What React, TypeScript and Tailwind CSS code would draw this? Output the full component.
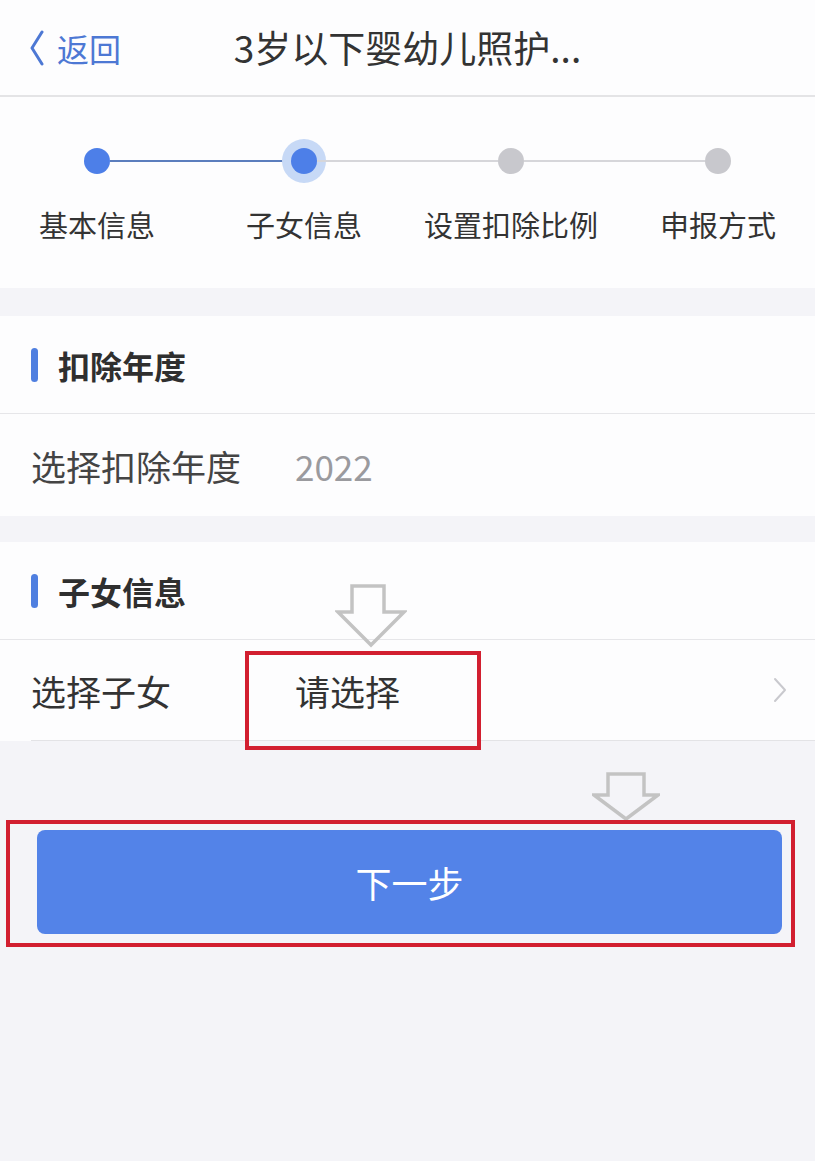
import React from "react";

const steps = [
  { label: "基本信息", state: "done" },
  { label: "子女信息", state: "active" },
  { label: "设置扣除比例", state: "todo" },
  { label: "申报方式", state: "todo" },
];

// gray outline arrow used as annotation in the screenshot
const DownArrow: React.FC<{ w: number; h: number; points: string }> = ({ w, h, points }) => (
  <svg width={w} height={h} viewBox={`0 0 ${w} ${h}`}>
    <polygon points={points} fill="none" stroke="#c3c3c3" strokeWidth={3.5} strokeLinejoin="miter" />
  </svg>
);

const SectionTitle: React.FC<{ title: string }> = ({ title }) => (
  <div className="flex items-center h-[98px] pl-[31px] border-b border-[#e6e6e9]">
    <span className="w-[7px] h-[34px] rounded-full bg-[#4f7fe0]" />
    <span className="ml-[20px] text-[32px] font-semibold text-[#2f2f2f] leading-none">{title}</span>
  </div>
);

export default function App() {
  return (
    <div
      className="w-[815px] h-[1161px] bg-[#f4f4f8] overflow-hidden"
      style={{ fontFamily: '"Noto Sans CJK SC", "Noto Sans", sans-serif' }}
    >
      {/* Header */}
      <div className="grid grid-cols-[1fr_auto_1fr] items-center h-[97px] bg-[#fdfdfe] border-b-2 border-[#e4e4e6]">
        <div className="flex items-center pl-[30px] text-[#4d78d4]">
          <svg width="14" height="36" viewBox="0 0 14 36">
            <polyline points="12,2 2,18 12,34" fill="none" stroke="#4d78d4" strokeWidth="3" strokeLinecap="round" strokeLinejoin="round" />
          </svg>
          <span className="ml-[13px] text-[32px] leading-none">返回</span>
        </div>
        <div className="text-[37px] text-[#333] leading-none">3岁以下婴幼儿照护...</div>
        <div />
      </div>

      {/* Stepper */}
      <div className="bg-[#fdfdfe] h-[191px] overflow-hidden flex justify-center pt-[48px]">
        {steps.map((s, i) => (
          <div key={s.label} className="w-[207px] shrink-0 flex flex-col items-center">
            <div className="w-full flex items-center h-[32px]">
              <div
                className={`flex-1 h-[2px] ${i === 0 ? "bg-transparent" : i === 1 ? "bg-[#5b7dbd]" : "bg-[#d6d6da]"}`}
              />
              {s.state === "active" ? (
                <span className="w-[26px] h-[26px] rounded-full bg-[#4d7fe8] ring-[9px] ring-[#c7d9f6]" />
              ) : (
                <span className={`w-[26px] h-[26px] rounded-full ${s.state === "done" ? "bg-[#4d7fe8]" : "bg-[#c8c8cd]"}`} />
              )}
              <div
                className={`flex-1 h-[2px] ${i === 3 ? "bg-transparent" : i === 0 ? "bg-[#5b7dbd]" : "bg-[#d6d6da]"}`}
              />
            </div>
            <div className="mt-[33px] text-[29px] leading-none text-[#333] whitespace-nowrap">{s.label}</div>
          </div>
        ))}
      </div>

      {/* 扣除年度 */}
      <div className="mt-[28px] bg-[#fdfdfe]">
        <SectionTitle title="扣除年度" />
        <div className="flex items-center h-[102px] pl-[31px]">
          <span className="w-[264px] text-[35px] leading-none text-[#444]">选择扣除年度</span>
          <span className="text-[35px] leading-none text-[#9a9a9e]">2022</span>
        </div>
      </div>

      {/* 子女信息 */}
      <div className="relative mt-[26px] bg-[#fdfdfe]">
        <SectionTitle title="子女信息" />
        <div className="ml-[31px] flex items-center h-[101px] pr-[28px] border-b border-[#e3e3e6]">
          <span className="w-[264px] text-[35px] leading-none text-[#333]">选择子女</span>
          <span className="flex-1 text-[35px] leading-none text-[#333]">请选择</span>
          <svg width="14" height="26" viewBox="0 0 14 26">
            <polyline points="2,2 12,13 2,24" fill="none" stroke="#c9c9ce" strokeWidth="2" strokeLinecap="round" strokeLinejoin="round" />
          </svg>
        </div>
        <div className="absolute left-[335px] top-[42px]">
          <DownArrow w={72} h={64} points="17,2 49,2 49,28 69,28 36,61 3,28 17,28" />
        </div>
        <div className="absolute left-[245px] top-[109px] w-[236px] h-[99px] border-4 border-[#d21f30]" />
      </div>

      {/* Next button */}
      <div className="relative pt-[89px]">
        <button className="ml-[37px] w-[745px] h-[104px] rounded-[8px] bg-[#5383e8] text-white text-[36px] leading-none">
          下一步
        </button>
        <div className="absolute left-[592px] top-[31px]">
          <DownArrow w={68} h={50} points="16,2 52,2 52,23 66,23 34,47 2,23 16,23" />
        </div>
        <div className="absolute left-[6px] top-[79px] w-[789px] h-[127px] border-4 border-[#d21f30]" />
      </div>
    </div>
  );
}
